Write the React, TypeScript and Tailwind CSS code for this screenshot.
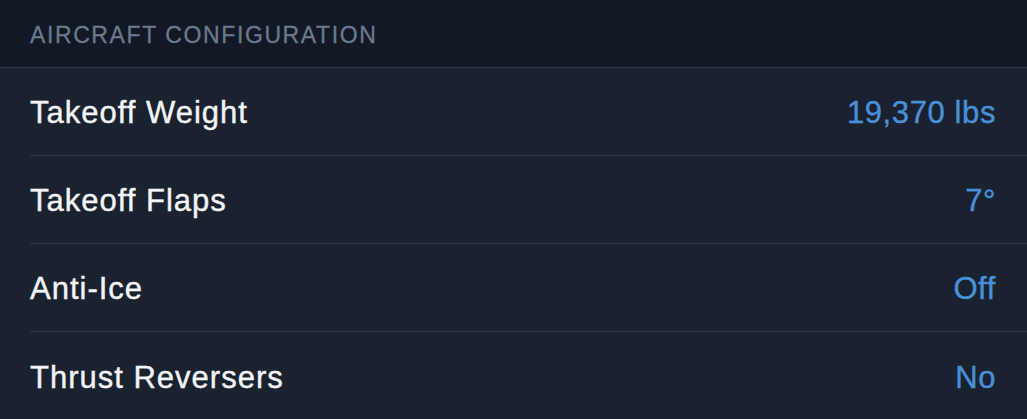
import React from "react";

const rows = [
  { label: "Takeoff Weight", value: "19,370 lbs" },
  { label: "Takeoff Flaps", value: "7°" },
  { label: "Anti-Ice", value: "Off" },
  { label: "Thrust Reversers", value: "No" },
];

export default function App() {
  return (
    <div className="w-[1027px] h-[419px] overflow-hidden bg-[#1a2230] font-['Liberation_Sans',Arial,sans-serif]">
      {/* Section header */}
      <div className="h-[68px] bg-[#121924] border-b border-[#2c3646] flex items-end pl-[30px] pb-[20px]">
        <span className="text-[23px] leading-none text-[#6b7a8c] tracking-[1.6px] [-webkit-text-stroke:0.3px_#6b7a8c]">
          AIRCRAFT CONFIGURATION
        </span>
      </div>

      {/* Rows */}
      <div className="pl-[30px]">
        {rows.map((row, i) => (
          <div
            key={row.label}
            className={
              "h-[88px] flex items-center justify-between pt-[4px] pr-[31px] " +
              (i < rows.length - 1 ? "border-b border-[#2e3847]" : "")
            }
          >
            <span className="text-[31px] tracking-[1px] text-[#f2f4f7] [-webkit-text-stroke:0.4px_#f2f4f7]">
              {row.label}
            </span>
            <span className="text-[31px] tracking-[0.6px] text-[#4a90d6] [-webkit-text-stroke:0.4px_#4a90d6]">
              {row.value}
            </span>
          </div>
        ))}
      </div>
    </div>
  );
}
